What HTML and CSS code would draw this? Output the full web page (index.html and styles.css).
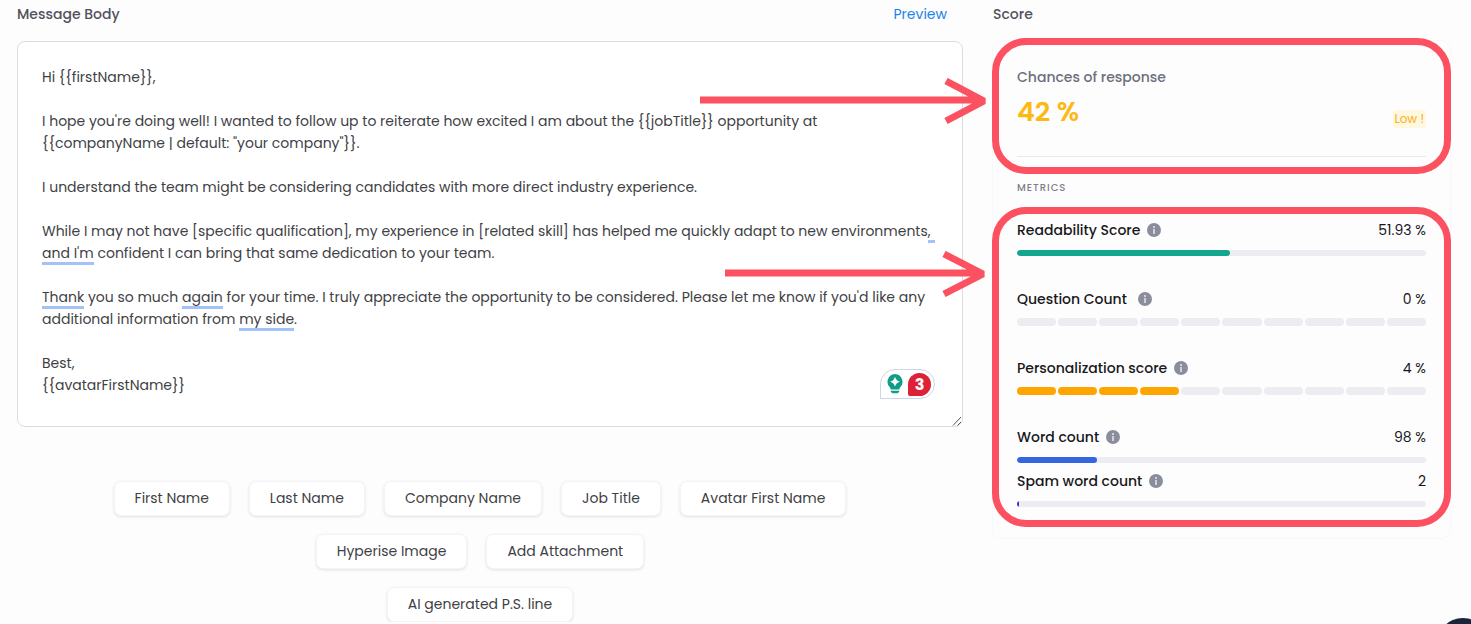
FILE: index.html
```html
<!DOCTYPE html>
<html lang="en">
<head>
<meta charset="utf-8">
<title>Message Editor</title>
<meta name="viewport" content="width=device-width,initial-scale=1">
<link rel="stylesheet" href="styles.css">
</head>
<body>

<main>
  <!-- Editor -->
  <section class="editor">
    <div class="heading">
      <label for="message">Message Body</label>
      <a href="#preview">Preview</a>
    </div>

    <div class="message-wrap">
      <textarea class="message-text" id="message" spellcheck="false">Hi {{firstName}},

I hope you're doing well! I wanted to follow up to reiterate how excited I am about the {{jobTitle}} opportunity at {{companyName | default: "your company"}}.

I understand the team might be considering candidates with more direct industry experience.

While I may not have [specific qualification], my experience in [related skill] has helped me quickly adapt to new environments, and I'm confident I can bring that same dedication to your team.

Thank you so much again for your time. I truly appreciate the opportunity to be considered. Please let me know if you'd like any additional information from my side.

Best,
{{avatarFirstName}}</textarea>
      <div class="marks" id="marks" aria-hidden="true"></div>
      <svg class="grip" viewBox="0 0 10 10" aria-hidden="true"><path d="M1 9.500L9 1M5.500 9.500L9 6"/></svg>
      <button class="checker" type="button" aria-label="3 writing suggestions">
        <svg viewBox="0 0 16 20" aria-hidden="true">
          <path fill="#0f9d87" d="M8 0a8 8 0 0 1 4.500 14.200V15.500h-9V14.200A8 8 0 0 1 8 0z"/>
          <path fill="#fff" d="M8 2.800Q9 6.700 12.800 7.700Q9 8.700 8 12.600Q7 8.700 3.200 7.700Q7 6.700 8 2.800z"/>
          <path fill="#0f9d87" d="M3.800 16.700h8.400v1l-1.500 1.600H5.300l-1.500-1.600z"/>
        </svg>
        <span>3</span>
      </button>
    </div>

    <div class="tokens">
      <div class="token-row">
        <button type="button">First Name</button>
        <button type="button">Last Name</button>
        <button type="button">Company Name</button>
        <button type="button">Job Title</button>
        <button type="button">Avatar First Name</button>
      </div>
      <div class="token-row">
        <button type="button">Hyperise Image</button>
        <button type="button">Add Attachment</button>
      </div>
      <div class="token-row">
        <button type="button">AI generated P.S. line</button>
      </div>
    </div>
  </section>

  <!-- Score -->
  <section class="score">
    <h2 class="heading">Score</h2>
    <div class="card">
      <div class="summary callout">
        <h3>Chances of response</h3>
        <div class="chance">
          <strong>42 %</strong>
          <span class="badge">Low !</span>
        </div>
        <svg class="arrow" viewBox="0 0 290 48" aria-hidden="true"><path d="M0 22H282M246 3L284 23L246 43"/></svg>
      </div>

      <h4>Metrics</h4>

      <div class="metrics callout">
        <div class="metric">
          <div class="metric-head"><span id="m1">Readability Score</span><i class="info"></i><b>51.93 %</b></div>
          <div class="bar" role="progressbar" aria-labelledby="m1" aria-valuenow="52"><div class="fill green" style="width:52%"></div></div>
        </div>
        <div class="metric">
          <div class="metric-head"><span id="m2">Question Count</span><i class="info spaced"></i><b>0 %</b></div>
          <div class="steps" role="progressbar" aria-labelledby="m2" aria-valuenow="0" data-on="0"></div>
        </div>
        <div class="metric">
          <div class="metric-head"><span id="m3">Personalization score</span><i class="info"></i><b>4 %</b></div>
          <div class="steps" role="progressbar" aria-labelledby="m3" aria-valuenow="4" data-on="4"></div>
        </div>
        <div class="metric tight">
          <div class="metric-head"><span id="m4">Word count</span><i class="info"></i><b>98 %</b></div>
          <div class="bar" role="progressbar" aria-labelledby="m4" aria-valuenow="98"><div class="fill blue" style="width:19.6%"></div></div>
        </div>
        <div class="metric tight">
          <div class="metric-head"><span id="m5">Spam word count</span><i class="info"></i><b>2</b></div>
          <div class="bar" role="progressbar" aria-labelledby="m5" aria-valuenow="2"><div class="fill indigo" style="width:0.4%"></div></div>
        </div>
        <svg class="arrow short" viewBox="0 0 265 48" aria-hidden="true"><path d="M0 22H257M219 3L258 23L219 43"/></svg>
      </div>
    </div>
  </section>
</main>

<button class="chat" type="button" aria-label="Open chat"></button>

<script src="app.js"></script>
</body>
</html>
```

FILE: styles.css
```css
:root{
  --text:#3f3f46;--dark:#18181b;--muted:#6b6f7b;--line:#dcdce2;
  --track:#ececf1;--callout:#fb5160;--amber:#fdb913
}
*{box-sizing:border-box;margin:0}
body{background:#fefdfe;color:var(--text);font:14px/22px Poppins,Inter,sans-serif;overflow-x:hidden}
button{font:inherit;color:inherit;cursor:pointer}
main{display:grid;grid-template-columns:minmax(0,2.07fr) minmax(0,1fr);gap:30px;padding:0 21px 0 17px}

.heading{display:flex;justify-content:space-between;height:41px;padding-top:3px;font-size:14px;font-weight:500;color:#52525b}
.editor .heading{padding-right:16px}
.heading a{color:#1a85e8;font-weight:400;text-decoration:none}

/* message box: the script draws underline bars into .marks */
.message-wrap{position:relative;height:386px}
.message-text{display:block;width:100%;height:100%;padding:24px;border:1px solid var(--line);border-radius:8px;background:#fff;color:var(--text);font:inherit;white-space:pre-wrap;overflow-wrap:break-word;overflow:hidden;resize:none;outline:none}
.measure{position:absolute;inset:0;visibility:hidden}
.marks{position:absolute;inset:0;pointer-events:none}
.marks i{position:absolute;height:3px;min-width:7px;background:#a4c2fa}
.grip{position:absolute;right:1px;bottom:1px;width:10px;height:10px;fill:none;stroke:#52525b}
.checker{position:absolute;right:28px;bottom:28px;display:flex;align-items:center;gap:5px;width:55px;height:30px;padding:0 3px 0 6px;border:1px solid #ccd6e6;border-radius:15px 15px 15px 0;background:#fff}
.checker svg{width:16px;height:20px}
.checker span{width:23px;height:23px;border-radius:12px 12px 12px 2px;background:#dc2335;color:#fff;font-size:16px;font-weight:700;line-height:23px;text-align:center}

.tokens{display:grid;gap:18px;padding-top:54px}
.token-row{display:flex;justify-content:center;gap:19px;padding-right:20px}
.token-row button{height:35px;padding:0 20px 2px;border:1px solid #f4f3f7;border-radius:7px;background:#fff;box-shadow:0 1px 3px rgba(30,20,60,.12)}

.card{border-radius:8px;padding-bottom:30px;box-shadow:0 0 0 1px #f8f7fb}
.callout{position:relative;padding:0 24px}
.callout::after{content:"";position:absolute;inset:-3px -1px -17px;border:7px solid var(--callout);border-radius:34px;pointer-events:none}
.arrow{position:absolute;right:100%;top:37px;width:290px;height:48px;margin-right:3px;fill:none;stroke:var(--callout);stroke-width:7;stroke-linejoin:bevel;pointer-events:none}
.summary{height:116px;padding-top:25px}
.summary::before{content:"";position:absolute;left:24px;right:24px;bottom:0;border-bottom:1px solid #eaeaee}
.summary h3{font-size:14px;font-weight:500;color:var(--muted)}
.chance{display:flex;justify-content:space-between;align-items:center;padding-top:8px}
.chance strong{font-size:27px;line-height:32px;font-weight:600;color:var(--amber)}
.badge{margin-top:14px;padding:0 2px;border-radius:3px;background:#fff8e0;color:#fbaf16;font-size:12px;line-height:18px}
.card h4{padding:20px 24px 0;font-size:10px;font-weight:500;letter-spacing:1px;text-transform:uppercase;color:#7e7e88}

.metrics{margin-top:20px;color:var(--dark)}
.metrics::after{inset:-12px -1px -19px}
.metric{display:flow-root;margin-bottom:31px}
.metric-head{display:flex;align-items:center;margin-bottom:8px;font-weight:500}
.metric-head b{margin-left:auto;font-weight:400}
.metric.tight{margin-bottom:6px}
.metric.tight:last-of-type{margin-bottom:0}
.info{display:grid;place-items:center;width:14px;height:14px;margin-left:7px;border-radius:50%;background:#8a8e9c}
.info.spaced{margin-left:11px}
.info::before{content:"";width:2px;height:8px;background:linear-gradient(#fff 2px,transparent 2px 3px,#fff 3px);opacity:.6}
.bar{height:6px;margin:9px 0 1px;border-radius:3px;background:var(--track);overflow:hidden}
.fill{height:100%;border-radius:3px}
.green{background:#12a68e}
.blue{background:#3366e0}
.indigo{background:#4338ca}
.steps{display:grid;grid-template-columns:repeat(10,1fr);gap:2px;height:8px}
.steps span{border-radius:4px;background:var(--track)}
.steps .on{background:#ffa500}
.arrow.short{top:32px;width:265px;margin-right:3px}

.chat{position:fixed;right:-19px;bottom:-48px;width:54px;height:54px;border:0;border-radius:50%;background:#1b2438}

@media(max-width:930px){main{grid-template-columns:1fr}.arrow{display:none}.token-row{flex-wrap:wrap}}
```

FILE: app.js
```js
const $ = sel => document.querySelector(sel);
const FLAGGED = /environments(,)|and I'm|Thank|again|my side/g;

// lay the text out in a hidden copy, read where flagged phrases fall, then drop the copy
function renderMarks() {
  const wrap = $('.message-wrap');
  const text = $('#message').value;
  const copy = document.createElement('div');
  copy.className = 'message-text measure';
  copy.textContent = text;
  wrap.append(copy);

  const base = wrap.getBoundingClientRect();
  const bars = [];
  for (const m of text.matchAll(FLAGGED)) {
    const end = m.index + m[0].length;
    const range = document.createRange();
    range.setStart(copy.firstChild, end - (m[1] || m[0]).length);
    range.setEnd(copy.firstChild, end);
    for (const r of range.getClientRects()) {
      const bar = document.createElement('i');
      bar.style.left = r.left - base.left + 'px';
      bar.style.top = r.bottom - base.top - 1 + 'px';
      bar.style.width = r.width + 'px';
      bars.push(bar);
    }
  }
  copy.remove();
  $('#marks').replaceChildren(...bars);
}

// ten-step meters
document.querySelectorAll('.steps').forEach(meter => {
  for (let i = 0; i < 10; i++) {
    const step = document.createElement('span');
    if (i < Number(meter.dataset.on)) step.className = 'on';
    meter.append(step);
  }
});

$('#message').addEventListener('input', renderMarks);
window.addEventListener('resize', renderMarks);
renderMarks();
```
